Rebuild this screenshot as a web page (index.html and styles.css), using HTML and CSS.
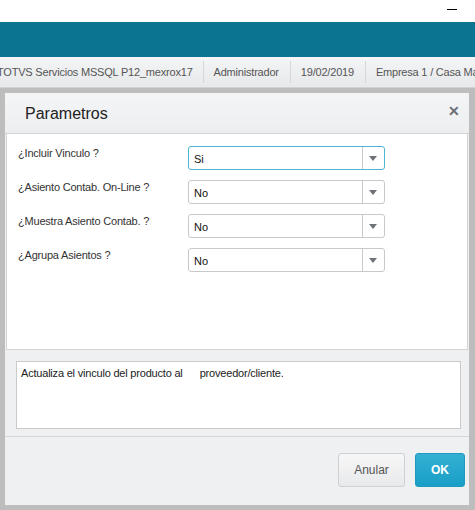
FILE: index.html
```html
<!DOCTYPE html>
<html>
<head>
<meta charset="utf-8">
<link rel="stylesheet" href="styles.css">
</head>
<body>
<div class="topbar"><span class="minimize"></span></div>
<div class="appbar"></div>
<div class="statusbar">
  <span class="status-item first">TOTVS Servicios MSSQL P12_mexrox17</span>
  <span class="status-item">Administrador</span>
  <span class="status-item">19/02/2019</span>
  <span class="status-item last">Empresa 1 / Casa Matriz</span>
</div>
<div class="overlay">
  <div class="dialog">
    <div class="dialog-header">
      <span class="dialog-title">Parametros</span>
      <span class="close">&#x2715;</span>
    </div>
    <div class="panel">
      <div class="row">
        <span class="label">¿Incluir Vinculo ?</span>
        <div class="select focused"><span class="value">Si</span><span class="arrow"></span></div>
      </div>
      <div class="row">
        <span class="label">¿Asiento Contab. On-Line ?</span>
        <div class="select"><span class="value">No</span><span class="arrow"></span></div>
      </div>
      <div class="row">
        <span class="label">¿Muestra Asiento Contab. ?</span>
        <div class="select"><span class="value">No</span><span class="arrow"></span></div>
      </div>
      <div class="row">
        <span class="label">¿Agrupa Asientos ?</span>
        <div class="select"><span class="value">No</span><span class="arrow"></span></div>
      </div>
    </div>
    <div class="help-area">
      <div class="help-box">Actualiza el vinculo del producto al      proveedor/cliente.</div>
    </div>
    <div class="footer">
      <button class="btn btn-cancel">Anular</button>
      <button class="btn btn-ok">OK</button>
    </div>
  </div>
</div>
</body>
</html>
```
FILE: styles.css
```css
html, body {
  margin: 0;
  padding: 0;
}
body {
  width: 475px;
  height: 510px;
  overflow: hidden;
  background: #bdbdbd;
  font-family: "Liberation Sans", Arial, sans-serif;
  font-size: 11px;
  color: #333;
}
.topbar {
  height: 22px;
  background: #fff;
  display: flex;
  justify-content: flex-end;
  align-items: flex-start;
  padding-right: 18px;
  box-sizing: border-box;
}
.minimize {
  width: 10px;
  height: 1px;
  background: #000;
  margin-top: 9px;
}
.appbar {
  height: 35px;
  background: #0b7490;
}
.statusbar {
  height: 30px;
  border-bottom: 1px solid #cfd1d3;
  background: linear-gradient(#f4f5f6, #e7e8ea);
  display: flex;
  align-items: center;
  white-space: nowrap;
  overflow: hidden;
  font-size: 11px;
  letter-spacing: -0.2px;
  color: #555;
}
.status-item {
  padding: 0 11px 0 10px;
  border-right: 1px solid #d6d7d9;
  line-height: 22px;
  flex: none;
}
.status-item.first {
  margin-left: -13px;
  padding-right: 10px;
}
.status-item.last {
  border-right: none;
}
.overlay {
  padding: 5px 6px 0 5px;
}
.dialog {
  width: 464px;
  height: 412px;
  background: #eff0f1;
  display: flex;
  flex-direction: column;
}
.dialog-header {
  height: 40px;
  border-bottom: 1px solid #d3d4d6;
  background: linear-gradient(#f4f5f6, #eceef0);
  display: flex;
  align-items: center;
  justify-content: space-between;
  padding: 0 9px 0 20px;
  flex: none;
}
.dialog-title {
  font-size: 16px;
  color: #222;
  margin-top: 1px;
}
.close {
  font-size: 14px;
  color: #6b7077;
  font-weight: bold;
  margin-top: -4px;
}
.panel {
  margin: 0 1px;
  height: 216px;
  box-sizing: border-box;
  background: #fff;
  border: 1px solid #d3d4d6;
  border-top: none;
  padding: 12px 0 0 11px;
  display: flex;
  flex-direction: column;
  gap: 10px;
  flex: none;
}
.row {
  display: flex;
  align-items: flex-start;
  height: 24px;
}
.label {
  width: 170px;
  line-height: 14px;
  letter-spacing: -0.2px;
  color: #333;
}
.select {
  width: 197px;
  height: 24px;
  box-sizing: border-box;
  border: 1px solid #c9c9c9;
  border-radius: 3px;
  display: flex;
  align-items: stretch;
  background: #fff;
}
.select.focused {
  border-color: #4cb6d3;
}
.value {
  flex: 1;
  line-height: 22px;
  padding-left: 5px;
  margin-top: 1px;
  color: #111;
}
.arrow {
  width: 21px;
  border-left: 1px solid #c9c9c9;
  position: relative;
}
.arrow::after {
  content: "";
  position: absolute;
  left: 6px;
  top: 9px;
  border-left: 4.5px solid transparent;
  border-right: 4.5px solid transparent;
  border-top: 5px solid #6e7177;
}
.help-area {
  padding: 11px 8px 0 11px;
  height: 87px;
  box-sizing: border-box;
  border-bottom: 1px solid #d6d7d9;
  flex: none;
}
.help-box {
  height: 68px;
  box-sizing: border-box;
  background: #fff;
  border: 1px solid #cacaca;
  padding: 5px 0 0 4px;
  white-space: pre;
  letter-spacing: -0.2px;
  color: #222;
}
.footer {
  flex: 1;
  display: flex;
  justify-content: flex-end;
  align-items: flex-start;
  padding: 16px 4px 0 0;
  gap: 10px;
}
.btn {
  height: 34px;
  border-radius: 3px;
  font-family: "Liberation Sans", Arial, sans-serif;
  font-size: 12px;
  cursor: pointer;
}
.btn-cancel {
  width: 67px;
  border: 1px solid #cfd0d2;
  background: linear-gradient(#f7f7f8, #e8e9ea);
  color: #555;
}
.btn-ok {
  width: 50px;
  border: 1px solid #1d9ac0;
  background: linear-gradient(#33b0d3, #1a9ec6);
  color: #fff;
  font-weight: bold;
}
```
